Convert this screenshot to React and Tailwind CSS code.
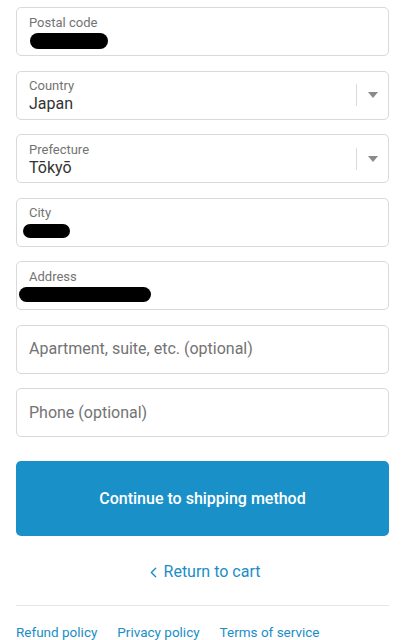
import { ChevronLeft } from 'lucide-react'

function Redacted({ w, h = 14, offset = 0 }) {
  return <div className="rounded-full bg-black" style={{ width: w, height: h, marginLeft: offset }} />
}

function FilledField({ label, children }) {
  return (
    <div className="flex h-[49px] flex-col justify-center rounded-[5px] border border-[#d9d9d9] bg-white px-[12px] pt-[2px]">
      <div className="text-[13px] leading-[16px] text-[#737373]">{label}</div>
      <div className="flex h-[20px] items-center">{children}</div>
    </div>
  )
}

function SelectField({ label, value }) {
  return (
    <div className="flex h-[49px] items-center rounded-[5px] border border-[#d9d9d9] bg-white pl-[12px]">
      <div className="flex flex-1 flex-col pt-[2px]">
        <div className="text-[13px] leading-[16px] text-[#737373]">{label}</div>
        <div className="text-[16px] leading-[20px] text-[#333333]">{value}</div>
      </div>
      <div className="h-[22px] w-px bg-[#d9d9d9]" />
      <div className="flex w-[31px] justify-center">
        <svg width="10" height="6" viewBox="0 0 10 6"><path d="M0 0h10L5 6z" fill="#8a8a8a" /></svg>
      </div>
    </div>
  )
}

function EmptyField({ placeholder }) {
  return (
    <div className="flex h-[49px] items-center rounded-[5px] border border-[#d9d9d9] bg-white px-[12px]">
      <span className="text-[16px] text-[#737373]">{placeholder}</span>
    </div>
  )
}

export default function App() {
  return (
    <div className="h-[640px] overflow-hidden bg-white px-4 pt-[7px] font-['Roboto',sans-serif]">
      <div className="grid gap-[14.5px]">
        <FilledField label="Postal code"><Redacted w={78} h={16} offset={1} /></FilledField>
        <SelectField label="Country" value="Japan" />
        <SelectField label="Prefecture" value="Tōkyō" />
        <FilledField label="City"><Redacted w={47} h={14} offset={-6} /></FilledField>
        <FilledField label="Address"><Redacted w={132} h={15} offset={-10} /></FilledField>
        <EmptyField placeholder="Apartment, suite, etc. (optional)" />
        <EmptyField placeholder="Phone (optional)" />
      </div>
      <button className="mt-[24px] flex h-[75px] w-full items-center justify-center rounded-[5px] bg-[#1a90c8] text-[16px] font-medium text-white">
        Continue to shipping method
      </button>
      <div className="mt-[26px] flex h-[20px] items-center justify-center text-[16px] text-[#1a8ec6]">
        <ChevronLeft size={17} strokeWidth={2} className="mr-[2px]" />
        Return to cart
      </div>
      <div className="mt-[23px] border-t border-[#e6e6e6]" />
      <div className="flex gap-[20px] pt-[16px] text-[13.5px] leading-[20px] text-[#1a8ec6]">
        <span>Refund policy</span>
        <span>Privacy policy</span>
        <span>Terms of service</span>
      </div>
    </div>
  )
}
